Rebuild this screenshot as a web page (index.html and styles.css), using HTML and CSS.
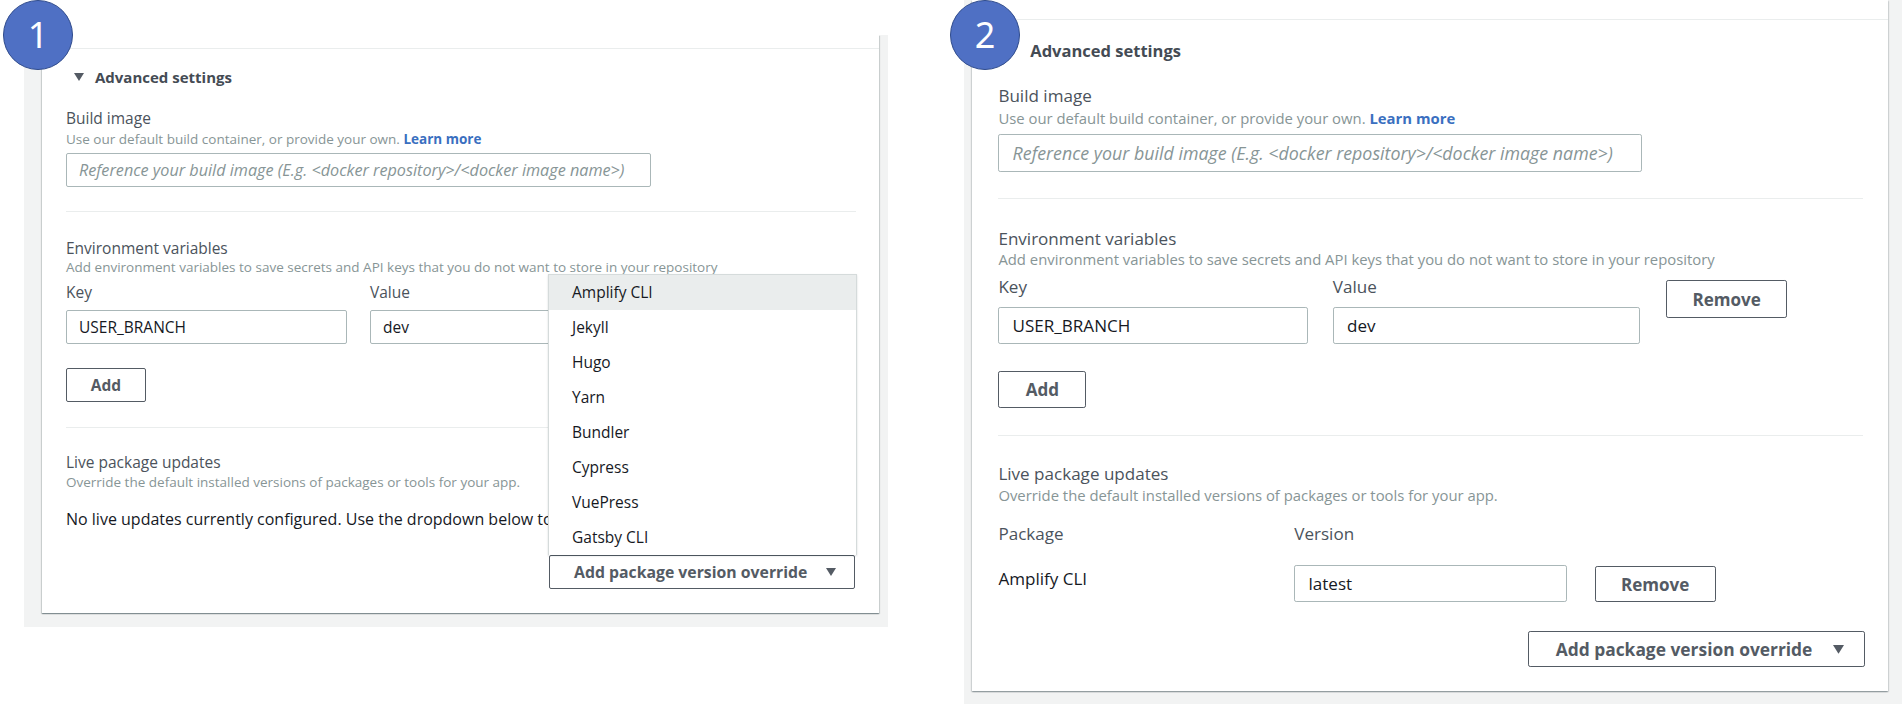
FILE: index.html
```html
<!DOCTYPE html>
<html lang="en">
<head>
<meta charset="utf-8">
<title>Advanced settings</title>
<link rel="stylesheet" href="styles.css">
</head>
<body>
<div class="canvas">
  <section class="shot shot-1">
    <div class="card">
      <div class="card-top"></div>
      <div class="card-body">
        <div class="adv-header">
          <svg class="caret" width="10" height="8" viewBox="0 0 10 8"><path d="M0 0 H10 L5 8 Z" fill="#545b64"/></svg>
          <span class="adv-title">Advanced settings</span>
        </div>
        <div class="field-label build-label">Build image</div>
        <div class="helper">Use our default build container, or provide your own. <a class="link">Learn more</a></div>
        <input class="input input-build" placeholder="Reference your build image (E.g. &lt;docker repository&gt;/&lt;docker image name&gt;)">
        <div class="section env">
          <div class="field-label">Environment variables</div>
          <div class="helper helper-env">Add environment variables to save secrets and API keys that you do not want to store in your repository</div>
          <div class="env-row">
            <div class="env-col env-key">
              <div class="field-label">Key</div>
              <input class="input" value="USER_BRANCH">
            </div>
            <div class="env-col env-val">
              <div class="field-label">Value</div>
              <input class="input" value="dev">
            </div>
          </div>
          <button class="btn btn-add">Add</button>
        </div>
        <div class="section live">
          <div class="field-label">Live package updates</div>
          <div class="helper helper-live">Override the default installed versions of packages or tools for your app.</div>
          <p class="no-live">No live updates currently configured. Use the dropdown below to</p>
          <div class="override-row">
            <div class="dropdown">
              <ul class="menu">
                <li class="menu-item is-active">Amplify CLI</li>
                <li class="menu-item">Jekyll</li>
                <li class="menu-item">Hugo</li>
                <li class="menu-item">Yarn</li>
                <li class="menu-item">Bundler</li>
                <li class="menu-item">Cypress</li>
                <li class="menu-item">VuePress</li>
                <li class="menu-item">Gatsby CLI</li>
              </ul>
              <button class="btn btn-override"><span>Add package version override</span><svg width="10" height="8" viewBox="0 0 10 8"><path d="M0 0 H10 L5 8 Z" fill="#545b64"/></svg></button>
            </div>
          </div>
        </div>
      </div>
    </div>
  </section>

  <section class="shot shot-2">
    <div class="card">
      <div class="card-top card-top-2"></div>
      <div class="card-body">
        <div class="adv-header">
          <svg class="caret" width="10" height="8" viewBox="0 0 10 8"><path d="M0 0 H10 L5 8 Z" fill="#545b64"/></svg>
          <span class="adv-title">Advanced settings</span>
        </div>
        <div class="field-label build-label">Build image</div>
        <div class="helper">Use our default build container, or provide your own. <a class="link">Learn more</a></div>
        <input class="input input-build" placeholder="Reference your build image (E.g. &lt;docker repository&gt;/&lt;docker image name&gt;)">
        <div class="section env">
          <div class="field-label">Environment variables</div>
          <div class="helper helper-env">Add environment variables to save secrets and API keys that you do not want to store in your repository</div>
          <div class="env-row">
            <div class="env-col env-key">
              <div class="field-label">Key</div>
              <input class="input" value="USER_BRANCH">
            </div>
            <div class="env-col env-val">
              <div class="field-label">Value</div>
              <input class="input" value="dev">
            </div>
            <div class="env-remove"><button class="btn btn-remove">Remove</button></div>
          </div>
          <button class="btn btn-add">Add</button>
        </div>
        <div class="section live">
          <div class="field-label">Live package updates</div>
          <div class="helper helper-live">Override the default installed versions of packages or tools for your app.</div>
          <div class="pkg-head">
            <div class="pkg-name-col">Package</div>
            <div class="pkg-ver-col">Version</div>
          </div>
          <div class="pkg-row">
            <div class="pkg-name-col pkg-name">Amplify CLI</div>
            <input class="input pkg-input" value="latest">
            <button class="btn btn-remove btn-pkg-remove">Remove</button>
          </div>
          <div class="override-row override-row-2">
            <button class="btn btn-override"><span>Add package version override</span><svg width="10" height="8" viewBox="0 0 10 8"><path d="M0 0 H10 L5 8 Z" fill="#545b64"/></svg></button>
          </div>
        </div>
      </div>
    </div>
  </section>

  <div class="badge badge-1">1</div>
  <div class="badge badge-2">2</div>
</div>
</body>
</html>
```

FILE: styles.css
```css
* { box-sizing: border-box; }

html, body {
  margin: 0;
  padding: 0;
  background: #ffffff;
  overflow: hidden;
}

body {
  font-family: "Open Sans", "Noto Sans", sans-serif;
  color: #16191f;
}

.canvas {
  position: relative;
  display: flex;
  align-items: flex-start;
  gap: 76px;
  width: 1902px;
  height: 704px;
  padding-left: 24px;
}

.shot {
  display: flex;
  background: #f2f3f3;
}

.shot-1 {
  width: 864px;
  height: 592px;
  margin-top: 35px;
  padding: 0 9px 14px 18px;
}

.shot-2 {
  zoom: 1.1;
  width: 852.7px;
  height: 640px;
  padding: 0 12.7px 12px 7.3px;
}

.card {
  flex: 1;
  background: #ffffff;
  box-shadow: 0 1px 1px 0 rgba(0, 28, 36, 0.3), 1px 1px 1px 0 rgba(0, 28, 36, 0.12), -1px 1px 1px 0 rgba(0, 28, 36, 0.12);
}

.card-top {
  height: 14px;
  border-bottom: 1px solid #eaeded;
}

.card-top-2 {
  height: 18px;
}

.card-body {
  padding: 0 23px 0 24px;
}

.adv-header {
  display: flex;
  align-items: center;
  gap: 11px;
  height: 20px;
  margin-top: 18px;
  margin-left: 8px;
}

.caret { flex: none; }

.adv-title {
  font-size: 15px;
  font-weight: 700;
  line-height: 20px;
  color: #444b54;
}

.field-label {
  font-size: 15.5px;
  line-height: 20px;
  color: #4b535c;
}

.build-label { margin-top: 21px; }

.helper {
  margin-top: 3px;
  font-size: 13.5px;
  line-height: 16px;
  color: #879596;
  white-space: nowrap;
}

.helper-env { margin-top: 1px; }
.helper-live { margin-top: 2px; }

.link {
  color: #3a6fc0;
  font-weight: 700;
}

.input {
  display: block;
  width: 100%;
  height: 34px;
  margin: 0;
  padding: 0 12px;
  border: 1px solid #aab7b8;
  border-radius: 2px;
  background: #ffffff;
  font-family: "Open Sans", "Noto Sans", sans-serif;
  font-size: 15.5px;
  color: #16191f;
  outline: none;
}

.input::placeholder {
  font-style: italic;
  color: #879596;
  opacity: 1;
}

.input-build {
  width: 585px;
  margin-top: 6px;
  font-size: 16.2px;
}

.section {
  border-top: 1px solid #eaeded;
}

.env {
  margin-top: 24px;
  padding-top: 26px;
}

.env-row {
  display: flex;
  align-items: flex-start;
  margin-top: 7px;
}

.env-col .input { margin-top: 8px; }

.env-key { width: 281px; }
.env-val { width: 279px; margin-left: 23px; }

.env-remove {
  margin-left: 24px;
  padding-top: 4px;
}

.btn {
  display: flex;
  align-items: center;
  justify-content: center;
  height: 34px;
  margin: 0;
  padding: 0;
  border: 1px solid #545b64;
  border-radius: 2px;
  background: #ffffff;
  font-family: "Open Sans", "Noto Sans", sans-serif;
  font-size: 15.5px;
  font-weight: 700;
  color: #545b64;
}

.btn-remove { width: 110px; }

.btn-add {
  width: 80px;
  margin-top: 24px;
}

.live {
  margin-top: 25px;
  padding-top: 24px;
}

.no-live {
  margin: 19px 0 0;
  font-size: 16px;
  line-height: 20px;
  color: #16191f;
  white-space: nowrap;
}

.override-row {
  display: flex;
  justify-content: flex-end;
  margin-top: 26px;
  padding-right: 1px;
}

.dropdown {
  position: relative;
}

.btn-override {
  width: 306px;
  justify-content: space-between;
  padding: 0 18px 0 24px;
  font-size: 15.8px;
}

.menu {
  position: absolute;
  left: -1px;
  right: -2px;
  bottom: 100%;
  margin: 0;
  padding: 0;
  list-style: none;
  background: #ffffff;
  border: 1px solid #d5dbdb;
  border-bottom: none;
  box-shadow: 0 1px 2px rgba(0, 28, 36, 0.15);
}

.menu-item {
  height: 35px;
  padding-left: 23px;
  font-size: 15.5px;
  line-height: 35px;
  color: #16191f;
}

.menu-item.is-active {
  background: #eaeded;
}

.pkg-head {
  display: flex;
  margin-top: 17px;
  font-size: 15.5px;
  line-height: 20px;
  color: #4b535c;
}

.pkg-name-col {
  width: 269px;
  flex: none;
}

.pkg-row {
  display: flex;
  align-items: flex-start;
  margin-top: 18px;
}

.pkg-name {
  padding-top: 3px;
  font-size: 15.5px;
  line-height: 20px;
  color: #16191f;
}

.pkg-input {
  width: 248px;
  flex: none;
}

.btn-pkg-remove {
  margin-left: 25px;
  margin-top: 1px;
  height: 33px;
}

.override-row-2 {
  padding-right: 0;
  margin-right: -2px;
}

.override-row-2 .btn-override {
  height: 33px;
}

.badge {
  position: absolute;
  top: 0;
  width: 70px;
  height: 70px;
  border-radius: 50%;
  background: #4f70c4;
  border: 1.5px solid #2f4b8c;
  display: flex;
  align-items: center;
  justify-content: center;
  font-family: "Noto Sans", "Open Sans", sans-serif;
  font-size: 36px;
  line-height: 1;
  color: #ffffff;
}

.badge-1 { left: 3px; }
.badge-2 { left: 950px; }
```
